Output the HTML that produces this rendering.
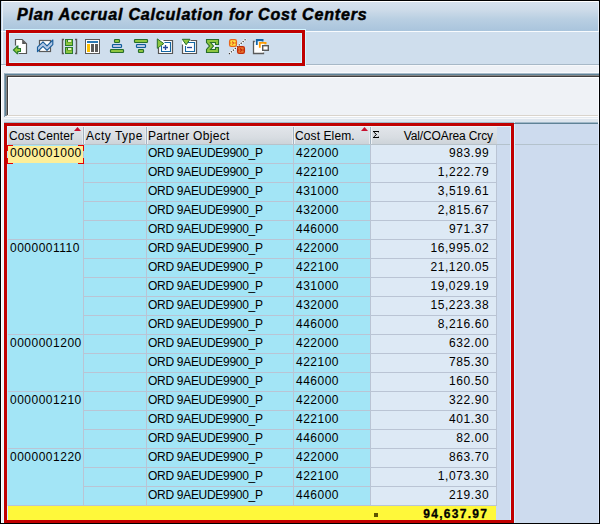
<!DOCTYPE html><html><head><meta charset="utf-8"><title>Plan Accrual Calculation for Cost Centers</title><style>
*{margin:0;padding:0;box-sizing:border-box}
html,body{width:600px;height:524px;overflow:hidden;background:#000}
body{position:relative;font-family:"Liberation Sans",sans-serif;font-size:12px;color:#000}
.a{position:absolute}
.t{position:absolute;white-space:nowrap;line-height:14px;height:14px}
.r{text-align:right}
svg{position:absolute;overflow:visible}
</style></head><body>
<div class="a" style="left:1px;top:1px;width:598px;height:522px;background:#eef1f6"></div>
<div class="a" style="left:1px;top:1px;width:598px;height:30px;background:linear-gradient(#d7e2ee,#cddbe9 30%,#b9cfe2 60%,#a9c4dc)"></div>
<div class="a" style="left:1px;top:1px;width:598px;height:1px;background:#fff"></div>
<div class="a" style="left:1px;top:1px;width:1px;height:30px;background:#c9daee"></div>
<div class="a" style="left:2px;top:2px;width:1px;height:29px;background:#eaf0f7"></div>
<div class="a" style="left:598px;top:1px;width:1px;height:30px;background:#e6eef8"></div>
<div class="a" style="left:1px;top:31px;width:598px;height:1px;background:#f8fbfe"></div>
<div class="a" style="left:1px;top:32px;width:598px;height:32px;background:#cfdeed"></div>
<div class="a" style="left:1px;top:32px;width:1px;height:32px;background:#dfe9f4"></div>
<div class="a" style="left:2px;top:32px;width:1px;height:32px;background:#f4f8fc"></div>
<div class="a" style="left:1px;top:64px;width:598px;height:1px;background:#a7b8c7"></div>
<div class="a" style="left:1px;top:65px;width:598px;height:1px;background:#f6f8fb"></div>
<div class="a" style="left:1px;top:66px;width:1px;height:457px;background:#fdfeff"></div>
<div class="a" style="left:598px;top:66px;width:1px;height:457px;background:#fafcff"></div>
<div class="a" style="left:4px;top:73px;width:595px;height:44px;border-top:1px solid #a9bccb;border-left:1px solid #8aa2b3"></div>
<div class="a" style="left:5px;top:74px;width:594px;height:42px;border-top:1px solid #5f8296;border-left:1px solid #5f8296"></div>
<div class="a" style="left:6px;top:75px;width:593px;height:41px;border-top:1px solid #858585;border-left:1px solid #858585"></div>
<div class="a" style="left:7px;top:76px;width:592px;height:40px;border-top:1px solid #3f3f3f;border-left:1px solid #3f3f3f"></div>
<div class="a" style="left:8px;top:72px;width:590px;height:1px;background:#f8fafc"></div>
<div class="a" style="left:8px;top:77px;width:590px;height:38px;border-top:1px solid #fff;border-left:1px solid #fff;background:#eff2f6"></div>
<div class="a" style="left:7px;top:115px;width:591px;height:1px;background:#d9d4cc"></div>
<div class="a" style="left:7px;top:116px;width:591px;height:1px;background:#fefefe"></div>
<div class="a" style="left:4px;top:117px;width:594px;height:1px;background:#e4eaf0"></div>
<div class="a" style="left:4px;top:118px;width:594px;height:1px;background:#f6f8fa"></div>
<div class="a" style="left:4px;top:119px;width:594px;height:3px;background:#dde5ed"></div>
<div class="a" style="left:4px;top:122px;width:594px;height:1px;background:#a0b8c8"></div>
<div class="a" style="left:4px;top:123px;width:594px;height:1px;background:#5f8296"></div>
<div class="a" style="left:4px;top:124px;width:594px;height:399px;background:#cddbee"></div>
<div class="a" style="left:7px;top:126px;width:490px;height:1px;background:#eef5fa"></div>
<div class="a" style="left:7px;top:127px;width:490px;height:17px;background:linear-gradient(#e2e5ea,#d8dde2 60%,#cdd3d9)"></div>
<div class="a" style="left:7px;top:144px;width:490px;height:1px;background:#b8c2ca"></div>
<div class="a" style="left:497px;top:144px;width:101px;height:1px;background:#b4c2cc"></div>
<div class="a" style="left:82px;top:127px;width:1px;height:17px;background:#e6eaee"></div>
<div class="a" style="left:83px;top:126px;width:1px;height:18px;background:#a3b3c1"></div>
<div class="a" style="left:84px;top:127px;width:1px;height:17px;background:#eef2f6"></div>
<div class="a" style="left:145px;top:127px;width:1px;height:17px;background:#e6eaee"></div>
<div class="a" style="left:146px;top:126px;width:1px;height:18px;background:#a3b3c1"></div>
<div class="a" style="left:147px;top:127px;width:1px;height:17px;background:#eef2f6"></div>
<div class="a" style="left:292px;top:127px;width:1px;height:17px;background:#e6eaee"></div>
<div class="a" style="left:293px;top:126px;width:1px;height:18px;background:#a3b3c1"></div>
<div class="a" style="left:294px;top:127px;width:1px;height:17px;background:#eef2f6"></div>
<div class="a" style="left:369px;top:127px;width:1px;height:17px;background:#e6eaee"></div>
<div class="a" style="left:370px;top:126px;width:1px;height:18px;background:#a3b3c1"></div>
<div class="a" style="left:371px;top:127px;width:1px;height:17px;background:#eef2f6"></div>
<div class="t" style="left:9px;top:129px;letter-spacing:0.1px">Cost Center</div>
<div class="t" style="left:86px;top:129px;letter-spacing:0.5px">Acty Type</div>
<div class="t" style="left:148px;top:129px;letter-spacing:0.3px">Partner Object</div>
<div class="t" style="left:295px;top:129px;letter-spacing:0.1px">Cost Elem.</div>
<div class="t r" style="left:380px;top:129px;width:112.86px;letter-spacing:-0.14px">Val/COArea Crcy</div>
<svg style="left:0;top:0" width="1" height="1"><path d="M373,131H379V132.6H378.2V132.1H373Z M373,138H379V136.4H378.2V136.9H373Z" fill="#000"/><polyline points="373.7,132 376.5,134.5 373.7,137" fill="none" stroke="#000" stroke-width="1"/></svg>
<svg style="left:74px;top:127px" width="8" height="5"><polygon points="0,4 3.5,0 7,4" fill="#c8102e"/></svg>
<svg style="left:361px;top:127px" width="8" height="5"><polygon points="0,4 3.5,0 7,4" fill="#c8102e"/></svg>
<div class="a" style="left:7px;top:145px;width:76px;height:18px;background:#a3e5f6"></div>
<div class="a" style="left:84px;top:145px;width:62px;height:18px;background:#a3e5f6"></div>
<div class="a" style="left:147px;top:145px;width:146px;height:18px;background:#a3e5f6"></div>
<div class="a" style="left:294px;top:145px;width:76px;height:18px;background:#a3e5f6"></div>
<div class="a" style="left:371px;top:145px;width:125px;height:18px;background:#dde9f5"></div>
<div class="a" style="left:83px;top:163px;width:414px;height:1px;background:#bac4d4"></div>
<div class="a" style="left:7px;top:163px;width:76px;height:1px;background:#a3e5f6"></div>
<div class="a" style="left:8px;top:146px;width:75px;height:17px;background:#fdee98"></div>
<div class="t" style="left:10px;top:146px;letter-spacing:0.5px">0000001000</div>
<div class="t" style="left:148px;top:146px;letter-spacing:-0.3px">ORD 9AEUDE9900_P</div>
<div class="t" style="left:296px;top:146px;letter-spacing:0.5px">422000</div>
<div class="t r" style="left:380px;top:146px;width:109.2px;letter-spacing:0.6px">983.99</div>
<div class="a" style="left:7px;top:164px;width:76px;height:18px;background:#a3e5f6"></div>
<div class="a" style="left:84px;top:164px;width:62px;height:18px;background:#a3e5f6"></div>
<div class="a" style="left:147px;top:164px;width:146px;height:18px;background:#a3e5f6"></div>
<div class="a" style="left:294px;top:164px;width:76px;height:18px;background:#a3e5f6"></div>
<div class="a" style="left:371px;top:164px;width:125px;height:18px;background:#dde9f5"></div>
<div class="a" style="left:83px;top:182px;width:414px;height:1px;background:#bac4d4"></div>
<div class="a" style="left:7px;top:182px;width:76px;height:1px;background:#a3e5f6"></div>
<div class="t" style="left:148px;top:165px;letter-spacing:-0.3px">ORD 9AEUDE9900_P</div>
<div class="t" style="left:296px;top:165px;letter-spacing:0.5px">422100</div>
<div class="t r" style="left:380px;top:165px;width:109.2px;letter-spacing:0.6px">1,222.79</div>
<div class="a" style="left:7px;top:183px;width:76px;height:18px;background:#a3e5f6"></div>
<div class="a" style="left:84px;top:183px;width:62px;height:18px;background:#a3e5f6"></div>
<div class="a" style="left:147px;top:183px;width:146px;height:18px;background:#a3e5f6"></div>
<div class="a" style="left:294px;top:183px;width:76px;height:18px;background:#a3e5f6"></div>
<div class="a" style="left:371px;top:183px;width:125px;height:18px;background:#dde9f5"></div>
<div class="a" style="left:83px;top:201px;width:414px;height:1px;background:#bac4d4"></div>
<div class="a" style="left:7px;top:201px;width:76px;height:1px;background:#a3e5f6"></div>
<div class="t" style="left:148px;top:184px;letter-spacing:-0.3px">ORD 9AEUDE9900_P</div>
<div class="t" style="left:296px;top:184px;letter-spacing:0.5px">431000</div>
<div class="t r" style="left:380px;top:184px;width:109.2px;letter-spacing:0.6px">3,519.61</div>
<div class="a" style="left:7px;top:202px;width:76px;height:18px;background:#a3e5f6"></div>
<div class="a" style="left:84px;top:202px;width:62px;height:18px;background:#a3e5f6"></div>
<div class="a" style="left:147px;top:202px;width:146px;height:18px;background:#a3e5f6"></div>
<div class="a" style="left:294px;top:202px;width:76px;height:18px;background:#a3e5f6"></div>
<div class="a" style="left:371px;top:202px;width:125px;height:18px;background:#dde9f5"></div>
<div class="a" style="left:83px;top:220px;width:414px;height:1px;background:#bac4d4"></div>
<div class="a" style="left:7px;top:220px;width:76px;height:1px;background:#a3e5f6"></div>
<div class="t" style="left:148px;top:203px;letter-spacing:-0.3px">ORD 9AEUDE9900_P</div>
<div class="t" style="left:296px;top:203px;letter-spacing:0.5px">432000</div>
<div class="t r" style="left:380px;top:203px;width:109.2px;letter-spacing:0.6px">2,815.67</div>
<div class="a" style="left:7px;top:221px;width:76px;height:18px;background:#a3e5f6"></div>
<div class="a" style="left:84px;top:221px;width:62px;height:18px;background:#a3e5f6"></div>
<div class="a" style="left:147px;top:221px;width:146px;height:18px;background:#a3e5f6"></div>
<div class="a" style="left:294px;top:221px;width:76px;height:18px;background:#a3e5f6"></div>
<div class="a" style="left:371px;top:221px;width:125px;height:18px;background:#dde9f5"></div>
<div class="a" style="left:7px;top:239px;width:490px;height:1px;background:#bac4d4"></div>
<div class="t" style="left:148px;top:222px;letter-spacing:-0.3px">ORD 9AEUDE9900_P</div>
<div class="t" style="left:296px;top:222px;letter-spacing:0.5px">446000</div>
<div class="t r" style="left:380px;top:222px;width:109.2px;letter-spacing:0.6px">971.37</div>
<div class="a" style="left:7px;top:240px;width:76px;height:18px;background:#a3e5f6"></div>
<div class="a" style="left:84px;top:240px;width:62px;height:18px;background:#a3e5f6"></div>
<div class="a" style="left:147px;top:240px;width:146px;height:18px;background:#a3e5f6"></div>
<div class="a" style="left:294px;top:240px;width:76px;height:18px;background:#a3e5f6"></div>
<div class="a" style="left:371px;top:240px;width:125px;height:18px;background:#dde9f5"></div>
<div class="a" style="left:83px;top:258px;width:414px;height:1px;background:#bac4d4"></div>
<div class="a" style="left:7px;top:258px;width:76px;height:1px;background:#a3e5f6"></div>
<div class="t" style="left:10px;top:241px;letter-spacing:0.5px">0000001110</div>
<div class="t" style="left:148px;top:241px;letter-spacing:-0.3px">ORD 9AEUDE9900_P</div>
<div class="t" style="left:296px;top:241px;letter-spacing:0.5px">422000</div>
<div class="t r" style="left:380px;top:241px;width:109.2px;letter-spacing:0.6px">16,995.02</div>
<div class="a" style="left:7px;top:259px;width:76px;height:18px;background:#a3e5f6"></div>
<div class="a" style="left:84px;top:259px;width:62px;height:18px;background:#a3e5f6"></div>
<div class="a" style="left:147px;top:259px;width:146px;height:18px;background:#a3e5f6"></div>
<div class="a" style="left:294px;top:259px;width:76px;height:18px;background:#a3e5f6"></div>
<div class="a" style="left:371px;top:259px;width:125px;height:18px;background:#dde9f5"></div>
<div class="a" style="left:83px;top:277px;width:414px;height:1px;background:#bac4d4"></div>
<div class="a" style="left:7px;top:277px;width:76px;height:1px;background:#a3e5f6"></div>
<div class="t" style="left:148px;top:260px;letter-spacing:-0.3px">ORD 9AEUDE9900_P</div>
<div class="t" style="left:296px;top:260px;letter-spacing:0.5px">422100</div>
<div class="t r" style="left:380px;top:260px;width:109.2px;letter-spacing:0.6px">21,120.05</div>
<div class="a" style="left:7px;top:278px;width:76px;height:18px;background:#a3e5f6"></div>
<div class="a" style="left:84px;top:278px;width:62px;height:18px;background:#a3e5f6"></div>
<div class="a" style="left:147px;top:278px;width:146px;height:18px;background:#a3e5f6"></div>
<div class="a" style="left:294px;top:278px;width:76px;height:18px;background:#a3e5f6"></div>
<div class="a" style="left:371px;top:278px;width:125px;height:18px;background:#dde9f5"></div>
<div class="a" style="left:83px;top:296px;width:414px;height:1px;background:#bac4d4"></div>
<div class="a" style="left:7px;top:296px;width:76px;height:1px;background:#a3e5f6"></div>
<div class="t" style="left:148px;top:279px;letter-spacing:-0.3px">ORD 9AEUDE9900_P</div>
<div class="t" style="left:296px;top:279px;letter-spacing:0.5px">431000</div>
<div class="t r" style="left:380px;top:279px;width:109.2px;letter-spacing:0.6px">19,029.19</div>
<div class="a" style="left:7px;top:297px;width:76px;height:18px;background:#a3e5f6"></div>
<div class="a" style="left:84px;top:297px;width:62px;height:18px;background:#a3e5f6"></div>
<div class="a" style="left:147px;top:297px;width:146px;height:18px;background:#a3e5f6"></div>
<div class="a" style="left:294px;top:297px;width:76px;height:18px;background:#a3e5f6"></div>
<div class="a" style="left:371px;top:297px;width:125px;height:18px;background:#dde9f5"></div>
<div class="a" style="left:83px;top:315px;width:414px;height:1px;background:#bac4d4"></div>
<div class="a" style="left:7px;top:315px;width:76px;height:1px;background:#a3e5f6"></div>
<div class="t" style="left:148px;top:298px;letter-spacing:-0.3px">ORD 9AEUDE9900_P</div>
<div class="t" style="left:296px;top:298px;letter-spacing:0.5px">432000</div>
<div class="t r" style="left:380px;top:298px;width:109.2px;letter-spacing:0.6px">15,223.38</div>
<div class="a" style="left:7px;top:316px;width:76px;height:18px;background:#a3e5f6"></div>
<div class="a" style="left:84px;top:316px;width:62px;height:18px;background:#a3e5f6"></div>
<div class="a" style="left:147px;top:316px;width:146px;height:18px;background:#a3e5f6"></div>
<div class="a" style="left:294px;top:316px;width:76px;height:18px;background:#a3e5f6"></div>
<div class="a" style="left:371px;top:316px;width:125px;height:18px;background:#dde9f5"></div>
<div class="a" style="left:7px;top:334px;width:490px;height:1px;background:#bac4d4"></div>
<div class="t" style="left:148px;top:317px;letter-spacing:-0.3px">ORD 9AEUDE9900_P</div>
<div class="t" style="left:296px;top:317px;letter-spacing:0.5px">446000</div>
<div class="t r" style="left:380px;top:317px;width:109.2px;letter-spacing:0.6px">8,216.60</div>
<div class="a" style="left:7px;top:335px;width:76px;height:18px;background:#a3e5f6"></div>
<div class="a" style="left:84px;top:335px;width:62px;height:18px;background:#a3e5f6"></div>
<div class="a" style="left:147px;top:335px;width:146px;height:18px;background:#a3e5f6"></div>
<div class="a" style="left:294px;top:335px;width:76px;height:18px;background:#a3e5f6"></div>
<div class="a" style="left:371px;top:335px;width:125px;height:18px;background:#dde9f5"></div>
<div class="a" style="left:83px;top:353px;width:414px;height:1px;background:#bac4d4"></div>
<div class="a" style="left:7px;top:353px;width:76px;height:1px;background:#a3e5f6"></div>
<div class="t" style="left:10px;top:336px;letter-spacing:0.5px">0000001200</div>
<div class="t" style="left:148px;top:336px;letter-spacing:-0.3px">ORD 9AEUDE9900_P</div>
<div class="t" style="left:296px;top:336px;letter-spacing:0.5px">422000</div>
<div class="t r" style="left:380px;top:336px;width:109.2px;letter-spacing:0.6px">632.00</div>
<div class="a" style="left:7px;top:354px;width:76px;height:18px;background:#a3e5f6"></div>
<div class="a" style="left:84px;top:354px;width:62px;height:18px;background:#a3e5f6"></div>
<div class="a" style="left:147px;top:354px;width:146px;height:18px;background:#a3e5f6"></div>
<div class="a" style="left:294px;top:354px;width:76px;height:18px;background:#a3e5f6"></div>
<div class="a" style="left:371px;top:354px;width:125px;height:18px;background:#dde9f5"></div>
<div class="a" style="left:83px;top:372px;width:414px;height:1px;background:#bac4d4"></div>
<div class="a" style="left:7px;top:372px;width:76px;height:1px;background:#a3e5f6"></div>
<div class="t" style="left:148px;top:355px;letter-spacing:-0.3px">ORD 9AEUDE9900_P</div>
<div class="t" style="left:296px;top:355px;letter-spacing:0.5px">422100</div>
<div class="t r" style="left:380px;top:355px;width:109.2px;letter-spacing:0.6px">785.30</div>
<div class="a" style="left:7px;top:373px;width:76px;height:18px;background:#a3e5f6"></div>
<div class="a" style="left:84px;top:373px;width:62px;height:18px;background:#a3e5f6"></div>
<div class="a" style="left:147px;top:373px;width:146px;height:18px;background:#a3e5f6"></div>
<div class="a" style="left:294px;top:373px;width:76px;height:18px;background:#a3e5f6"></div>
<div class="a" style="left:371px;top:373px;width:125px;height:18px;background:#dde9f5"></div>
<div class="a" style="left:7px;top:391px;width:490px;height:1px;background:#bac4d4"></div>
<div class="t" style="left:148px;top:374px;letter-spacing:-0.3px">ORD 9AEUDE9900_P</div>
<div class="t" style="left:296px;top:374px;letter-spacing:0.5px">446000</div>
<div class="t r" style="left:380px;top:374px;width:109.2px;letter-spacing:0.6px">160.50</div>
<div class="a" style="left:7px;top:392px;width:76px;height:18px;background:#a3e5f6"></div>
<div class="a" style="left:84px;top:392px;width:62px;height:18px;background:#a3e5f6"></div>
<div class="a" style="left:147px;top:392px;width:146px;height:18px;background:#a3e5f6"></div>
<div class="a" style="left:294px;top:392px;width:76px;height:18px;background:#a3e5f6"></div>
<div class="a" style="left:371px;top:392px;width:125px;height:18px;background:#dde9f5"></div>
<div class="a" style="left:83px;top:410px;width:414px;height:1px;background:#bac4d4"></div>
<div class="a" style="left:7px;top:410px;width:76px;height:1px;background:#a3e5f6"></div>
<div class="t" style="left:10px;top:393px;letter-spacing:0.5px">0000001210</div>
<div class="t" style="left:148px;top:393px;letter-spacing:-0.3px">ORD 9AEUDE9900_P</div>
<div class="t" style="left:296px;top:393px;letter-spacing:0.5px">422000</div>
<div class="t r" style="left:380px;top:393px;width:109.2px;letter-spacing:0.6px">322.90</div>
<div class="a" style="left:7px;top:411px;width:76px;height:18px;background:#a3e5f6"></div>
<div class="a" style="left:84px;top:411px;width:62px;height:18px;background:#a3e5f6"></div>
<div class="a" style="left:147px;top:411px;width:146px;height:18px;background:#a3e5f6"></div>
<div class="a" style="left:294px;top:411px;width:76px;height:18px;background:#a3e5f6"></div>
<div class="a" style="left:371px;top:411px;width:125px;height:18px;background:#dde9f5"></div>
<div class="a" style="left:83px;top:429px;width:414px;height:1px;background:#bac4d4"></div>
<div class="a" style="left:7px;top:429px;width:76px;height:1px;background:#a3e5f6"></div>
<div class="t" style="left:148px;top:412px;letter-spacing:-0.3px">ORD 9AEUDE9900_P</div>
<div class="t" style="left:296px;top:412px;letter-spacing:0.5px">422100</div>
<div class="t r" style="left:380px;top:412px;width:109.2px;letter-spacing:0.6px">401.30</div>
<div class="a" style="left:7px;top:430px;width:76px;height:18px;background:#a3e5f6"></div>
<div class="a" style="left:84px;top:430px;width:62px;height:18px;background:#a3e5f6"></div>
<div class="a" style="left:147px;top:430px;width:146px;height:18px;background:#a3e5f6"></div>
<div class="a" style="left:294px;top:430px;width:76px;height:18px;background:#a3e5f6"></div>
<div class="a" style="left:371px;top:430px;width:125px;height:18px;background:#dde9f5"></div>
<div class="a" style="left:7px;top:448px;width:490px;height:1px;background:#bac4d4"></div>
<div class="t" style="left:148px;top:431px;letter-spacing:-0.3px">ORD 9AEUDE9900_P</div>
<div class="t" style="left:296px;top:431px;letter-spacing:0.5px">446000</div>
<div class="t r" style="left:380px;top:431px;width:109.2px;letter-spacing:0.6px">82.00</div>
<div class="a" style="left:7px;top:449px;width:76px;height:18px;background:#a3e5f6"></div>
<div class="a" style="left:84px;top:449px;width:62px;height:18px;background:#a3e5f6"></div>
<div class="a" style="left:147px;top:449px;width:146px;height:18px;background:#a3e5f6"></div>
<div class="a" style="left:294px;top:449px;width:76px;height:18px;background:#a3e5f6"></div>
<div class="a" style="left:371px;top:449px;width:125px;height:18px;background:#dde9f5"></div>
<div class="a" style="left:83px;top:467px;width:414px;height:1px;background:#bac4d4"></div>
<div class="a" style="left:7px;top:467px;width:76px;height:1px;background:#a3e5f6"></div>
<div class="t" style="left:10px;top:450px;letter-spacing:0.5px">0000001220</div>
<div class="t" style="left:148px;top:450px;letter-spacing:-0.3px">ORD 9AEUDE9900_P</div>
<div class="t" style="left:296px;top:450px;letter-spacing:0.5px">422000</div>
<div class="t r" style="left:380px;top:450px;width:109.2px;letter-spacing:0.6px">863.70</div>
<div class="a" style="left:7px;top:468px;width:76px;height:18px;background:#a3e5f6"></div>
<div class="a" style="left:84px;top:468px;width:62px;height:18px;background:#a3e5f6"></div>
<div class="a" style="left:147px;top:468px;width:146px;height:18px;background:#a3e5f6"></div>
<div class="a" style="left:294px;top:468px;width:76px;height:18px;background:#a3e5f6"></div>
<div class="a" style="left:371px;top:468px;width:125px;height:18px;background:#dde9f5"></div>
<div class="a" style="left:83px;top:486px;width:414px;height:1px;background:#bac4d4"></div>
<div class="a" style="left:7px;top:486px;width:76px;height:1px;background:#a3e5f6"></div>
<div class="t" style="left:148px;top:469px;letter-spacing:-0.3px">ORD 9AEUDE9900_P</div>
<div class="t" style="left:296px;top:469px;letter-spacing:0.5px">422100</div>
<div class="t r" style="left:380px;top:469px;width:109.2px;letter-spacing:0.6px">1,073.30</div>
<div class="a" style="left:7px;top:487px;width:76px;height:18px;background:#a3e5f6"></div>
<div class="a" style="left:84px;top:487px;width:62px;height:18px;background:#a3e5f6"></div>
<div class="a" style="left:147px;top:487px;width:146px;height:18px;background:#a3e5f6"></div>
<div class="a" style="left:294px;top:487px;width:76px;height:18px;background:#a3e5f6"></div>
<div class="a" style="left:371px;top:487px;width:125px;height:18px;background:#dde9f5"></div>
<div class="a" style="left:7px;top:505px;width:490px;height:1px;background:#bac4d4"></div>
<div class="t" style="left:148px;top:488px;letter-spacing:-0.3px">ORD 9AEUDE9900_P</div>
<div class="t" style="left:296px;top:488px;letter-spacing:0.5px">446000</div>
<div class="t r" style="left:380px;top:488px;width:109.2px;letter-spacing:0.6px">219.30</div>
<div class="a" style="left:83px;top:145px;width:1px;height:361px;background:#bac4d4"></div>
<div class="a" style="left:146px;top:145px;width:1px;height:361px;background:#bac4d4"></div>
<div class="a" style="left:293px;top:145px;width:1px;height:361px;background:#bac4d4"></div>
<div class="a" style="left:370px;top:145px;width:1px;height:361px;background:#bac4d4"></div>
<div class="a" style="left:496px;top:145px;width:1px;height:361px;background:#bac4d4"></div>
<div class="a" style="left:7px;top:506px;width:489px;height:14px;background:#fff83a"></div>
<div class="a" style="left:374px;top:513px;width:4px;height:4px;background:#5c5200"></div>
<div class="t r" style="left:380px;top:507px;width:108.3px;font-weight:bold;letter-spacing:1.3px;-webkit-text-stroke:0.3px #000">94,637.97</div>
<div class="a" style="left:5px;top:29px;width:301px;height:38px;border:1px solid #d4f4ff;border-top:1px solid #d4f4ff;border-left:none"></div>
<div class="a" style="left:6px;top:30px;width:299px;height:36px;border:3px solid #c00000"></div>
<div class="a" style="left:9px;top:33px;width:293px;height:30px;border:1px solid #d4f4ff;border-bottom:1px solid #d4f4ff"></div>
<div class="a" style="left:3px;top:122px;width:512px;height:402px;border:1px solid #d4f4ff;border-top:none;border-left:1px solid #d4f4ff"></div>
<div class="a" style="left:4px;top:123px;width:510px;height:400px;border:3px solid #c00000"></div>
<div class="a" style="left:7px;top:126px;width:504px;height:394px;border:1px solid #d4f4ff;border-bottom:none"></div>
<div class="a" style="left:514px;top:123px;width:1px;height:1px;background:#5f8296"></div>
<div class="a" style="left:598px;top:124px;width:1px;height:399px;background:#dce8fb"></div>
<div class="a" style="left:7px;top:151px;width:1px;height:7px;background:#c0e6f2"></div>
<div class="a" style="left:7px;top:164px;width:1px;height:342px;background:#c0e6f2"></div>
<div class="a" style="left:3px;top:123px;width:1px;height:400px;background:#e8fcff"></div>
<div class="a" style="left:3px;top:122px;width:1px;height:1px;background:#f0f4f8"></div>
<div class="a" style="left:7px;top:126px;width:503px;height:1px;background:#eaf4fb"></div>
<svg style="left:0;top:0" width="600" height="70"><path d="M15,39H22.3L27,43.7V54H19V45H15Z" fill="#fff"/><path d="M15.5,45.5V39.5H22.2L26.5,43.8V53.5H19" fill="none" stroke="#555" stroke-width="1.2"/><path d="M22.2,40V44H26.2Z" fill="#555"/><path d="M12.6,50L17,45.7H18.3V48H21V52H18.3V54.3H17Z" fill="#267a2a"/><path d="M14.2,50L17.2,47V49H20V51H17.2V53Z" fill="#8fc83a"/><rect x="39.5" y="40.5" width="11" height="11" fill="#fff" stroke="#5a5a5a" stroke-width="1.2"/><path d="M37.5,47.2L43,41.8L47,45.8L52.8,40V44.6L47,50.3L43,46.3L37.5,51.7Z" fill="#b4c9e6" stroke="#1b5e9b" stroke-width="1.15" stroke-linejoin="round"/><path d="M64,39.5H62.5V53.5H64M75,39.5H76.5V53.5H75" fill="none" stroke="#5a5a5a" stroke-width="1.4"/><rect x="65" y="39" width="8" height="7" fill="#2b7a2e"/><rect x="66" y="40" width="6" height="5" fill="#8dc63f"/><rect x="67" y="40" width="1" height="2" fill="#2b7a2e"/><rect x="67" y="42" width="5" height="1" fill="#6aac2a"/><rect x="68" y="40" width="3" height="2" fill="#e2efcc"/><rect x="65" y="47" width="8" height="7" fill="#2b7a2e"/><rect x="66" y="48" width="6" height="5" fill="#8dc63f"/><rect x="67" y="48" width="1" height="2" fill="#2b7a2e"/><rect x="67" y="50" width="5" height="1" fill="#6aac2a"/><rect x="68" y="48" width="3" height="2" fill="#e2efcc"/><rect x="85.5" y="39.5" width="14" height="14" fill="#fff" stroke="#5a5a5a"/><rect x="87" y="41" width="11" height="2" fill="#2a78b4"/><rect x="87" y="44" width="3" height="8" fill="#ffc000"/><rect x="91" y="44" width="3" height="8" fill="#5a5a5a"/><rect x="95" y="44" width="3" height="8" fill="#5a5a5a"/><rect x="114.5" y="39.5" width="5" height="3" rx="0.8" fill="#8dc63f" stroke="#276e2b" stroke-width="1.2"/><rect x="112.5" y="44.5" width="9" height="3" rx="0.8" fill="#bcc6e2" stroke="#0f5d9b" stroke-width="1.2"/><rect x="110.5" y="49.5" width="13" height="3" rx="0.8" fill="#8dc63f" stroke="#276e2b" stroke-width="1.2"/><rect x="134.5" y="39.5" width="13" height="3" rx="0.8" fill="#8dc63f" stroke="#276e2b" stroke-width="1.2"/><rect x="136.5" y="44.5" width="9" height="3" rx="0.8" fill="#bcc6e2" stroke="#0f5d9b" stroke-width="1.2"/><rect x="138.5" y="49.5" width="5" height="3" rx="0.8" fill="#8dc63f" stroke="#276e2b" stroke-width="1.2"/><path d="M158,40H173V54H158Z" fill="#fff"/><path d="M163.5,40.5H172.5V53.5H158.5V48" fill="none" stroke="#555" stroke-width="1.2"/><path d="M164.5,42.5H170.5V51.5H161.5V46" fill="none" stroke="#1466a3" stroke-width="1.1"/><path d="M163,47.5H168M165.5,45V50" fill="none" stroke="#24479a" stroke-width="1.3"/><path d="M157.3,38.9L163.8,43.6L157.3,48.3Z" fill="#8dc63f" stroke="#276e2b" stroke-linejoin="round"/><path d="M182,40H197V54H182Z" fill="#fff"/><path d="M190.5,40.5H196.5V53.5H182.5V44.5" fill="none" stroke="#555" stroke-width="1.2"/><path d="M188,42.5H194.5V51.5H185.5V46" fill="none" stroke="#1466a3" stroke-width="1.1"/><path d="M187,47.5H192" fill="none" stroke="#24479a" stroke-width="1.3"/><path d="M182.3,39.3H190L186.15,44.8Z" fill="#8dc63f" stroke="#276e2b" stroke-linejoin="round"/><path d="M212,42H216V46H213Z M212,50H216V46H213Z" fill="#eef2fa"/><path d="M206.5,39.5H218.5V44.5H215.5V42.5H210.5L213.5,46L210.5,49.5H215.5V47.5H218.5V52.5H206.5V49.5L209.5,46L206.5,42.5Z" fill="#8dc63f" stroke="#276e2b" stroke-width="1.1"/><line x1="229" y1="54" x2="246" y2="39" stroke="#fff" stroke-width="2.2"/><line x1="229" y1="54" x2="246" y2="39" stroke="#333" stroke-width="1.2" stroke-dasharray="1.3,1.3"/><rect x="229.6" y="39.6" width="6.8" height="6.8" rx="1.6" fill="#ffe640" stroke="#e8641c" stroke-width="1.3"/><polyline points="231.9,41.6 233.9,43 231.9,44.4" fill="none" stroke="#e8641c" stroke-width="1.3"/><rect x="230" y="42.5" width="1" height="1" fill="#e8641c"/><rect x="235" y="42.5" width="1.2" height="1" fill="#e8641c"/><rect x="237.6" y="46.6" width="6.8" height="6.8" rx="1.6" fill="#e97530" stroke="#c22c0a" stroke-width="1.3"/><polyline points="239.9,48.6 241.9,50 239.9,51.4" fill="none" stroke="#c22c0a" stroke-width="1.3"/><rect x="238" y="49.5" width="1" height="1" fill="#c22c0a"/><rect x="243" y="49.5" width="1.2" height="1" fill="#c22c0a"/><rect x="254" y="42" width="10" height="11" fill="#fff"/><path d="M254.8,41.5H253.5V53.5H263.5V52.5" fill="none" stroke="#5a5a5a" stroke-width="1.3"/><path d="M256.8,45V40H262.6V41.5" fill="none" stroke="#1063a5" stroke-width="1.8"/><path d="M259.8,47.8V42.9H265.6V44.2" fill="none" stroke="#ff9c00" stroke-width="1.8"/><rect x="262.7" y="45.7" width="5.6" height="4.6" fill="#fff" stroke="#5a5a5a" stroke-width="1.4"/></svg>
<svg style="left:7px;top:145px" width="77" height="19" shape-rendering="crispEdges"><path d="M0,0h6v1h-5v5h-1z M77,0v6h-1v-5h-5v-1z M0,19v-6h1v5h5v1z M77,19h-6v-1h5v-5h1z" fill="#e60000"/></svg>
<div class="t" style="left:17px;top:4px;height:22px;line-height:22px;font-size:16px;font-weight:bold;font-style:italic;letter-spacing:0.82px;-webkit-text-stroke:0.5px #000">Plan Accrual Calculation for Cost Centers</div>
<div class="a" style="left:0px;top:0px;width:600px;height:1px;background:#000"></div>
<div class="a" style="left:0px;top:0px;width:1px;height:524px;background:#000"></div>
<div class="a" style="left:599px;top:0px;width:1px;height:524px;background:#000"></div>
<div class="a" style="left:0px;top:523px;width:600px;height:1px;background:#000"></div>
</body></html>
